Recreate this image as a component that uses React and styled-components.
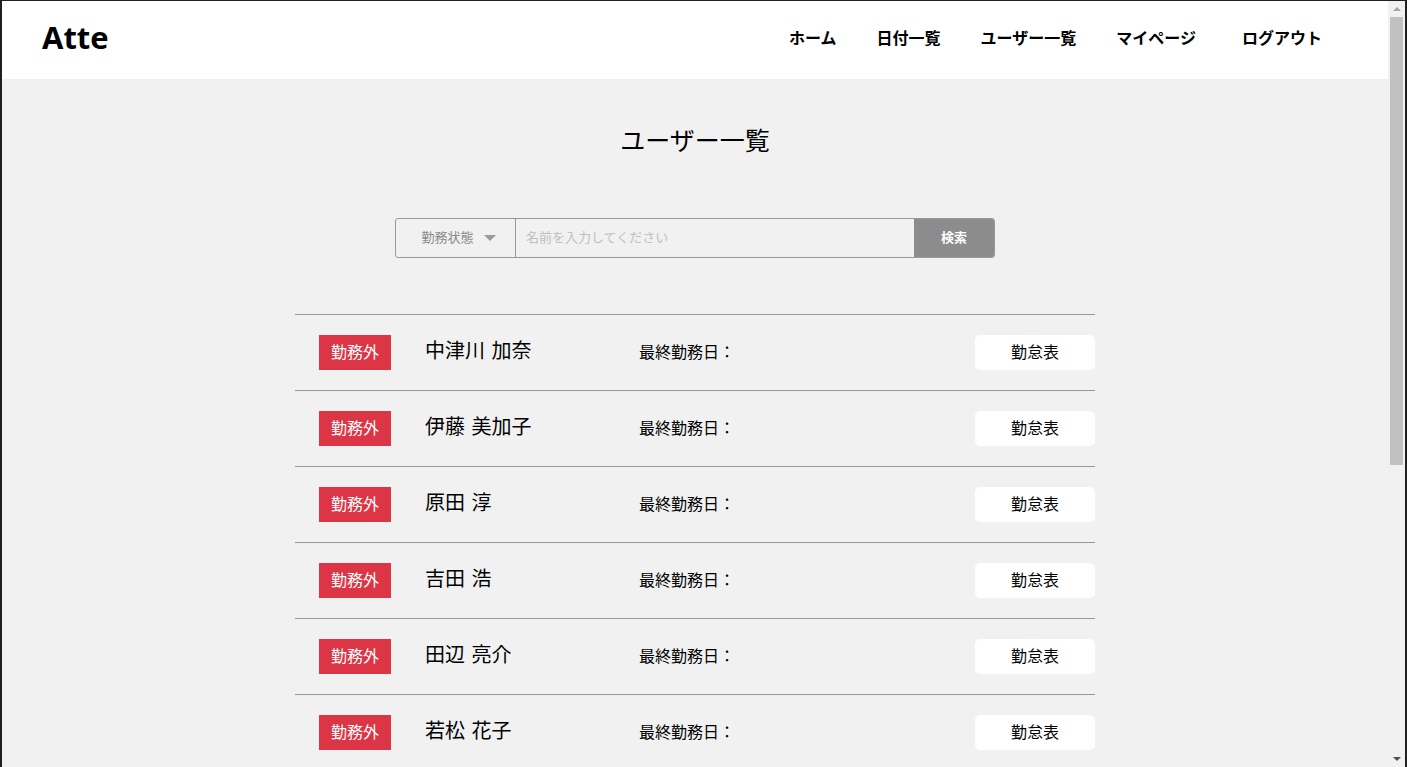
import React from "react";
import styled, { createGlobalStyle } from "styled-components";

const Global = createGlobalStyle`
  html, body { margin: 0; padding: 0; overflow: hidden; }
  body {
    background: #f1f1f1;
    font-family: "Noto Sans CJK JP", "Noto Sans", sans-serif;
    color: #000;
  }
  * { box-sizing: border-box; }
`;

const Frame = styled.div`
  height: 100vh;
  display: flex;
  border-top: 1px solid #202024;
  border-left: 2px solid #202024;
  border-right: 2px solid #202024;
  overflow: hidden;
`;

const Page = styled.div`
  flex: 1;
  min-width: 0;
  overflow: hidden;
`;

const ScrollBar = styled.div`
  width: 17px;
  flex: none;
  display: flex;
  flex-direction: column;
  background: #f1f1f1;
`;

const ScrollArrow = styled.div`
  height: 16px;
  display: flex;
  align-items: center;
  justify-content: center;
  &::before {
    content: "";
    width: 0;
    height: 0;
    border-left: 4px solid transparent;
    border-right: 4px solid transparent;
    ${(p) =>
      p.$down
        ? "border-top: 4px solid #505050;"
        : "border-bottom: 4px solid #a3a3a3;"}
  }
`;

const Track = styled.div`
  flex: 1;
  padding: 0 2px;
`;

const Thumb = styled.div`
  height: 448px;
  background: #c1c1c1;
`;

const Header = styled.header`
  height: 78px;
  background: #fff;
  display: flex;
  align-items: center;
  justify-content: space-between;
  padding: 0 66px 7px 40px;
`;

const Logo = styled.h1`
  margin: 0;
  font-family: "Open Sans", "Noto Sans", sans-serif;
  font-weight: 700;
  font-size: 31px;
  letter-spacing: 0;
`;

const Nav = styled.nav`
  display: flex;
  align-items: center;
  gap: 40px;
`;

const NavLink = styled.a`
  font-weight: 700;
  font-size: 16px;
  color: #000;
  text-decoration: none;
  margin-left: ${(p) => (p.$extra ? "6px" : "0")};
`;

const Main = styled.main`
  display: flex;
  flex-direction: column;
  align-items: center;
  padding-top: 42px;
`;

const Title = styled.h2`
  margin: 0;
  font-size: 25px;
  font-weight: 400;
  line-height: 36px;
`;

const SearchForm = styled.form`
  margin-top: 61px;
  width: 600px;
  height: 40px;
  display: flex;
  border: 1px solid #999;
  border-radius: 3px;
  overflow: hidden;
`;

const Select = styled.div`
  width: 120px;
  display: flex;
  align-items: center;
  justify-content: center;
  gap: 10px;
  padding: 0 0 3px 6px;
  border-right: 1px solid #999;
  font-size: 13px;
  color: #8a8a8a;
`;

const Caret = styled.span`
  width: 0;
  height: 0;
  margin-top: 3px;
  border-left: 6px solid transparent;
  border-right: 6px solid transparent;
  border-top: 6px solid #9a9a9a;
`;

const Input = styled.input`
  flex: 1;
  border: none;
  background: transparent;
  padding: 0 10px 3px;
  font-family: inherit;
  font-size: 13px;
  outline: none;
  &::placeholder { color: #c0c0c0; }
`;

const SearchButton = styled.button`
  width: 80px;
  border: none;
  padding: 0 0 3px;
  background: #8c8c8c;
  color: #fff;
  font-family: inherit;
  font-size: 13px;
  font-weight: 700;
`;

const List = styled.ul`
  list-style: none;
  margin: 56px 0 0;
  padding: 0;
  width: 800px;
  border-top: 1px solid #999;
`;

const Row = styled.li`
  height: 76px;
  display: flex;
  align-items: center;
  border-bottom: 1px solid #999;
  padding-left: 24px;
`;

const Badge = styled.span`
  width: 72px;
  height: 35px;
  display: flex;
  align-items: center;
  justify-content: center;
  padding-bottom: 3px;
  background: #dc3545;
  color: #fff;
  font-size: 16px;
`;

const Name = styled.span`
  margin: 0 0 6px 34px;
  width: 214px;
  font-size: 20px;
  word-spacing: 2px;
`;

const LastWork = styled.span`
  flex: 1;
  margin-bottom: 4px;
  font-size: 16px;
`;

const SheetButton = styled.button`
  width: 120px;
  height: 35px;
  border: none;
  padding: 0 0 4px;
  border-radius: 5px;
  background: #fff;
  font-family: inherit;
  font-size: 16px;
  color: #000;
`;

const users = [
  "中津川 加奈",
  "伊藤 美加子",
  "原田 淳",
  "吉田 浩",
  "田辺 亮介",
  "若松 花子",
];

export default function App() {
  return (
    <>
      <Global />
      <Frame>
        <Page>
          <Header>
            <Logo>Atte</Logo>
            <Nav>
              <NavLink href="#">ホーム</NavLink>
              <NavLink href="#">日付一覧</NavLink>
              <NavLink href="#">ユーザー一覧</NavLink>
              <NavLink href="#">マイページ</NavLink>
              <NavLink href="#" $extra>ログアウト</NavLink>
            </Nav>
          </Header>
          <Main>
            <Title>ユーザー一覧</Title>
            <SearchForm onSubmit={(e) => e.preventDefault()}>
              <Select>
                勤務状態
                <Caret />
              </Select>
              <Input placeholder="名前を入力してください" />
              <SearchButton type="submit">検索</SearchButton>
            </SearchForm>
            <List>
              {users.map((u) => (
                <Row key={u}>
                  <Badge>勤務外</Badge>
                  <Name>{u}</Name>
                  <LastWork>最終勤務日：</LastWork>
                  <SheetButton>勤怠表</SheetButton>
                </Row>
              ))}
            </List>
          </Main>
        </Page>
        <ScrollBar>
          <ScrollArrow />
          <Track>
            <Thumb />
          </Track>
          <ScrollArrow $down />
        </ScrollBar>
      </Frame>
    </>
  );
}
